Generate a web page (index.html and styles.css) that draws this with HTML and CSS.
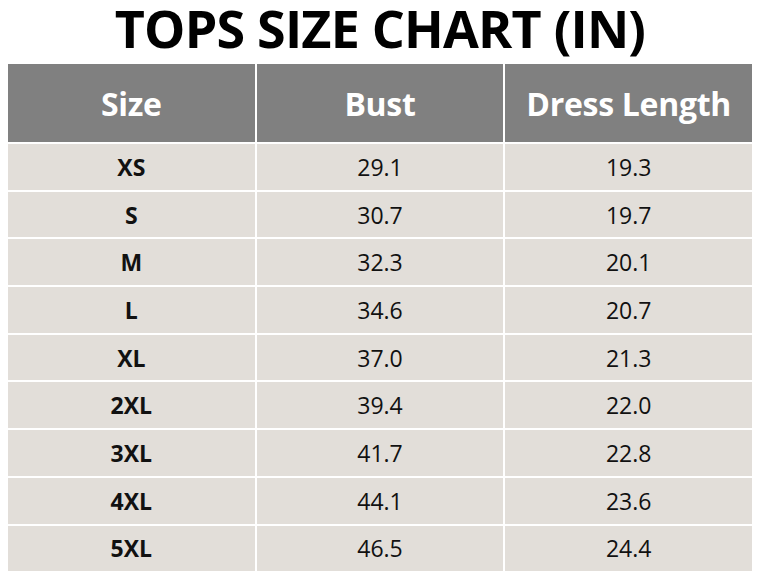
FILE: index.html
```html
<!DOCTYPE html>
<html>
<head>
<meta charset="utf-8">
<link rel="stylesheet" href="styles.css">
</head>
<body>
<h1 class="title">TOPS SIZE CHART (IN)</h1>
<div class="chart">
  <div class="cell head">Size</div><div class="cell head">Bust</div><div class="cell head">Dress Length</div>
  <div class="cell size">XS</div><div class="cell">29.1</div><div class="cell">19.3</div>
  <div class="cell size">S</div><div class="cell">30.7</div><div class="cell">19.7</div>
  <div class="cell size">M</div><div class="cell">32.3</div><div class="cell">20.1</div>
  <div class="cell size">L</div><div class="cell">34.6</div><div class="cell">20.7</div>
  <div class="cell size">XL</div><div class="cell">37.0</div><div class="cell">21.3</div>
  <div class="cell size">2XL</div><div class="cell">39.4</div><div class="cell">22.0</div>
  <div class="cell size">3XL</div><div class="cell">41.7</div><div class="cell">22.8</div>
  <div class="cell size">4XL</div><div class="cell">44.1</div><div class="cell">23.6</div>
  <div class="cell size">5XL</div><div class="cell">46.5</div><div class="cell">24.4</div>
</div>
</body>
</html>
```
FILE: styles.css
```css
html, body {
  margin: 0;
  padding: 0;
  background: #ffffff;
}
body {
  font-family: "Open Sans", "Noto Sans", sans-serif;
  color: #000;
  padding: 0 7px 0 8px;
}
.title {
  margin: 0 0 8px 0;
  text-align: center;
  font-size: 52px;
  font-weight: 700;
  letter-spacing: -0.8px;
  line-height: 56px;
}
.chart {
  display: grid;
  grid-template-columns: 1fr 1fr 1fr;
  grid-template-rows: 78px repeat(9, 45.7px);
  gap: 2px;
  background: #ffffff;
}
.cell {
  background: #e2ded9;
  display: flex;
  align-items: center;
  justify-content: center;
  font-size: 23px;
  color: #111;
}
.cell.head {
  background: #808080;
  color: #ffffff;
  font-size: 32px;
  font-weight: 700;
  letter-spacing: -0.3px;
}
.cell.size {
  font-weight: 700;
}
```
